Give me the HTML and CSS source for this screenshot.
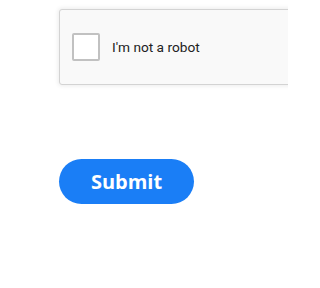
FILE: index.html
```html
<!DOCTYPE html>
<html>
<head>
<meta charset="utf-8">
<link rel="stylesheet" href="styles.css">
</head>
<body>
<div class="page">
  <div class="captcha">
    <div class="check"></div>
    <span class="label">I'm not a robot</span>
  </div>
  <button class="submit">Submit</button>
</div>
</body>
</html>
```
FILE: styles.css
```css
html, body {
  margin: 0;
  padding: 0;
  background: #ffffff;
  width: 288px;
  height: 288px;
  overflow: hidden;
}
.page {
  box-sizing: border-box;
  width: 288px;
  height: 288px;
  overflow: hidden;
  padding: 9px 0 0 59px;
  display: flex;
  flex-direction: column;
  align-items: flex-start;
}
.captcha {
  box-sizing: border-box;
  width: 304px;
  min-width: 304px;
  height: 76px;
  background: #f9f9f9;
  border: 1px solid #d3d3d3;
  border-radius: 3px;
  box-shadow: 0 0 4px 1px rgba(0,0,0,0.08);
  display: flex;
  align-items: center;
  padding-left: 12px;
  gap: 12px;
  flex-shrink: 0;
}
.check {
  box-sizing: border-box;
  width: 28px;
  height: 28px;
  background: #ffffff;
  border: 2px solid #c1c1c1;
  border-radius: 2px;
  flex-shrink: 0;
}
.label {
  font-family: Roboto, "Liberation Sans", sans-serif;
  font-size: 13.7px;
  color: #222222;
}
.submit {
  margin-top: 74px;
  width: 135px;
  height: 45px;
  border: none;
  border-radius: 23px;
  background: #1a7ef6;
  color: #ffffff;
  font-family: "Open Sans", "Liberation Sans", sans-serif;
  font-weight: 700;
  font-size: 20px;
  padding: 0;
  flex-shrink: 0;
}
```
